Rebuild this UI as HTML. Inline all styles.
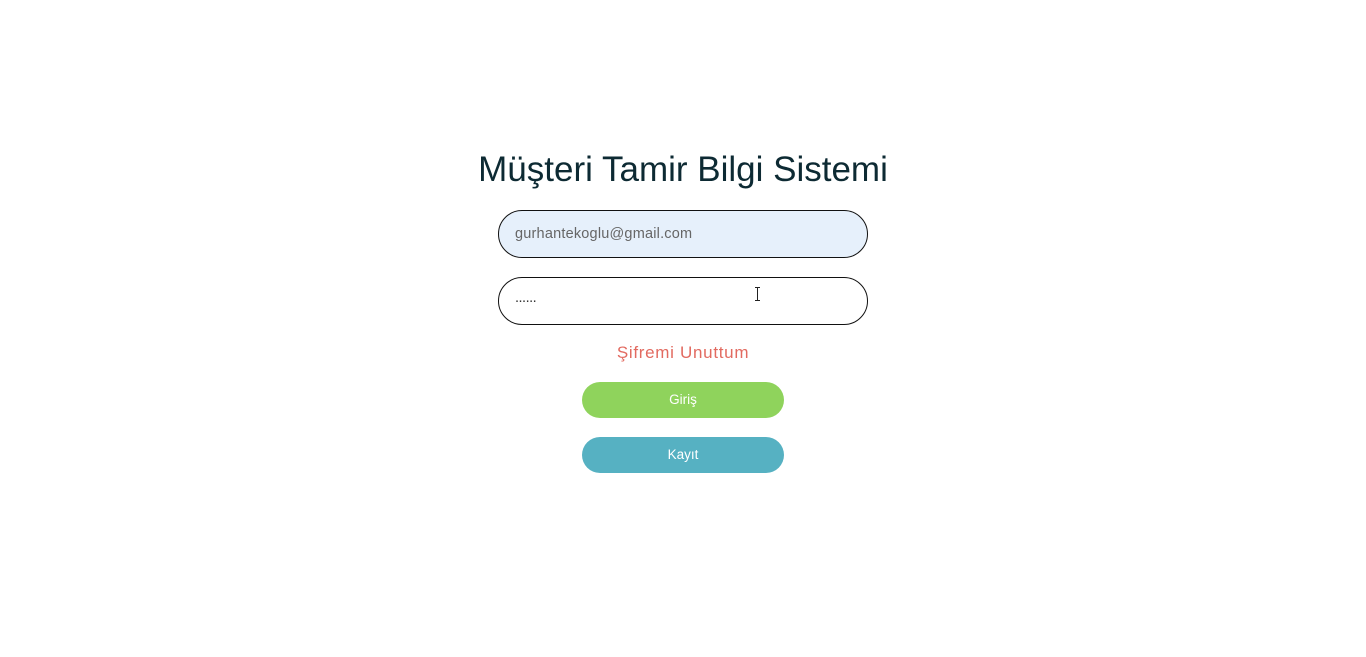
<!DOCTYPE html>
<html><head><meta charset="utf-8"><style>
body{margin:0;width:1366px;height:657px;background:#fff;font-family:"Liberation Sans",sans-serif;position:relative;overflow:hidden}
.t{position:absolute;left:0;width:1366px;top:150px;text-align:center;font-size:35px;color:#0d2a33;letter-spacing:0px}
.in{position:absolute;left:498px;width:368px;height:46px;border:1px solid #111;border-radius:24px;box-sizing:content-box}
.in span{position:absolute;left:16px;font-size:14.5px;color:#666;letter-spacing:0.2px}
.b{position:absolute;left:582px;width:202px;height:36px;border-radius:18px;color:#fff;text-align:center;line-height:36px;font-size:13.5px}
</style></head><body>
<div class="t">Müşteri Tamir Bilgi Sistemi</div>
<div class="in" style="top:210px;background:#e6f0fb"><span style="top:15px">gurhantekoglu@gmail.com</span></div>
<div class="in" style="top:277px;background:#fff"><span style="top:12px;color:#333;letter-spacing:-0.5px">......</span>
<div style="position:absolute;left:256px;top:9px;width:5px;height:14px;border-top:1px solid #222;border-bottom:1px solid #222;box-sizing:border-box"><div style="margin-left:2px;width:1px;height:12px;background:#222"></div></div></div>
<div style="position:absolute;left:0;width:1366px;top:343px;text-align:center;font-size:17px;color:#e26a60;letter-spacing:0.7px">Şifremi Unuttum</div>
<div class="b" style="top:382px;background:#8fd35c">Giriş</div>
<div class="b" style="top:437px;background:#56b1c2">Kayıt</div>
</body></html>
